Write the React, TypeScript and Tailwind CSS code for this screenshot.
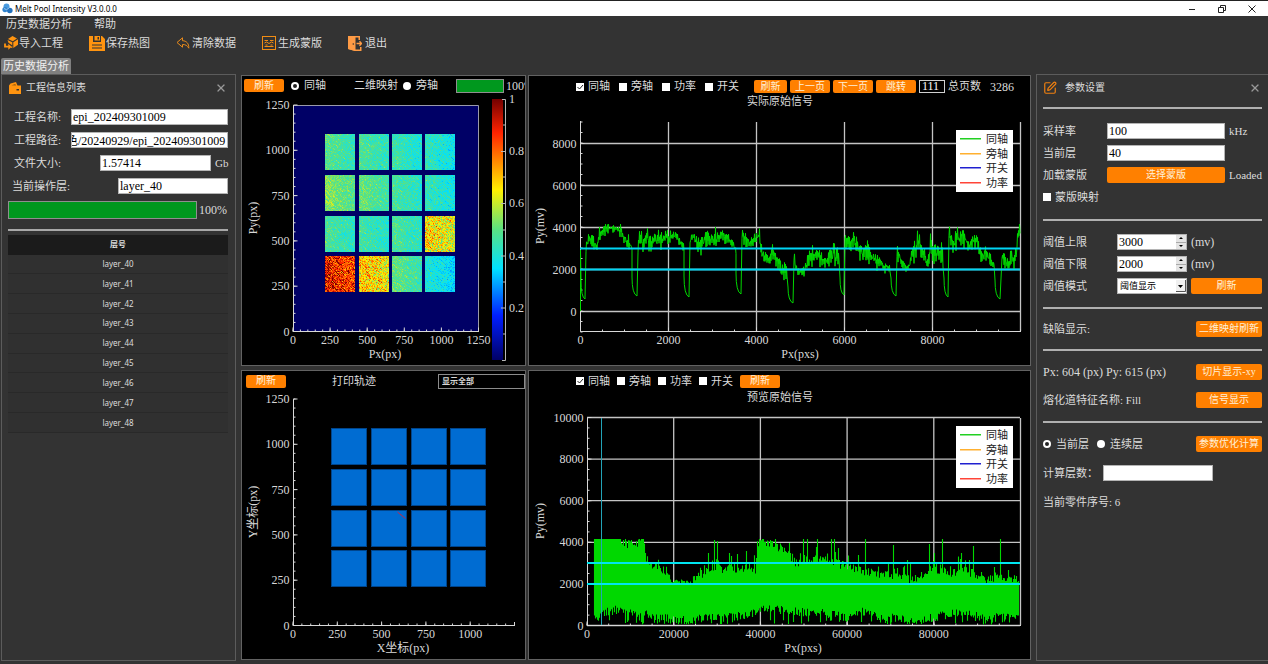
import type { ReactNode } from "react";
import { SquarePen, X } from "lucide-react";

const LAYERS = ["layer_40", "layer_41", "layer_42", "layer_43", "layer_44", "layer_45", "layer_46", "layer_47", "layer_48"];

const SERIES = [
    { name: "同轴", color: "#22d022" },
    { name: "旁轴", color: "#ffb030" },
    { name: "开关", color: "#2020d0" },
    { name: "功率", color: "#ff4438" },
];

const CHANNELS = ["同轴", "旁轴", "功率", "开关"];

// Small deterministic generator so the plots look the same on every render
function createRandom(seed: number) {
    let s = seed;
    return () => {
        s = (s * 48271) % 2147483647;
        return s / 2147483647;
    };
}

/* ---------- colour map ---------- */

const COLOR_STOPS: [number, number, number, number][] = [
    [0, 0, 0, 102],
    [0.17, 0, 30, 255],
    [0.35, 0, 225, 255],
    [0.5, 90, 225, 130],
    [0.65, 255, 240, 0],
    [0.87, 255, 35, 0],
    [1, 115, 0, 0],
];

function colorAt(value: number) {
    const v = Math.min(1, Math.max(0, value));
    for (let i = 1; i < COLOR_STOPS.length; i++) {
        const a = COLOR_STOPS[i - 1];
        const b = COLOR_STOPS[i];
        if (v <= b[0]) {
            const t = (v - a[0]) / (b[0] - a[0]);
            const mix = (k: number) => Math.round(a[k] + (b[k] - a[k]) * t);
            return `rgb(${mix(1)},${mix(2)},${mix(3)})`;
        }
    }
    return "rgb(115,0,0)";
}

/* ---------- heat map cells ---------- */

const HEAT_COLS = [325, 359, 392, 425];
const HEAT_ROWS = [134, 175, 216, 256];
const HEAT_MEAN = [
    [0.46, 0.45, 0.42, 0.4],
    [0.51, 0.48, 0.44, 0.41],
    [0.44, 0.43, 0.44, 0.63],
    [0.86, 0.66, 0.47, 0.37],
];

function buildHeatPaths() {
    const rand = createRandom(7013);
    const levels: string[] = Array(41).fill("");
    HEAT_ROWS.forEach((y0, r) => {
        HEAT_COLS.forEach((x0, c) => {
            const mean = HEAT_MEAN[r][c];
            const hot = mean > 0.6;
            const spread = hot ? 0.18 : 0.08;
            const streaks = Array.from({ length: 70 }, () => ({ gain: (rand() - 0.4) * (hot ? 0.22 : 0.12), phase: rand() * 6 }));
            for (let y = 0; y < 36; y++) {
                for (let x = 0; x < 30; x++) {
                    const edge = (15 - x) * 0.002;
                    const { gain, phase } = streaks[y - x + 30];
                    const streak = gain * Math.max(0, Math.sin((x + y) / 5 + phase));
                    const v = mean + edge + streak + (rand() + rand() - 1) * spread;
                    const level = Math.max(0, Math.min(40, Math.round(v * 40)));
                    levels[level] += `M${x0 + x} ${y0 + y}h1v1h-1z`;
                }
            }
        });
    });
    return levels.map((d, i) => ({ d, fill: colorAt(i / 40) })).filter((p) => p.d);
}

const HEAT_PATHS = buildHeatPaths();

/* ---------- raw signal of the current page ---------- */

// Bursts between laser-off dips, each point is [x, top, bottom]
const BURSTS: number[][][] = [
    [[586, 240, 252], [589, 232, 243], [594, 236, 250], [597, 240, 254], [600, 228, 240], [605, 224, 234], [618, 224, 232], [621, 225, 240], [625, 232, 245], [632, 243, 253]],
    [[638, 244, 252], [640, 224, 248], [643, 238, 256], [647, 226, 245], [650, 236, 256], [653, 226, 248], [658, 234, 248], [663, 230, 248], [668, 230, 247], [675, 230, 240], [680, 235, 248], [684, 244, 252]],
    [[690, 230, 250], [693, 230, 240], [696, 234, 250], [701, 238, 257], [706, 230, 247], [712, 232, 246], [718, 232, 246], [722, 224, 240], [728, 233, 248], [732, 238, 250], [736, 243, 258]],
    [[742, 226, 240], [745, 232, 248], [750, 236, 248], [755, 236, 246], [759, 225, 245], [762, 245, 258], [768, 254, 269], [772, 245, 262], [776, 250, 268], [782, 262, 277], [787, 262, 280]],
    [[794, 250, 262], [796, 265, 275], [803, 268, 276], [806, 258, 274], [810, 244, 266], [814, 246, 268], [822, 250, 268], [830, 250, 270], [834, 242, 268], [839, 248, 266]],
    [[845, 224, 245], [848, 236, 252], [855, 230, 250], [858, 242, 252], [863, 246, 262], [867, 238, 260], [873, 252, 264], [880, 256, 268], [885, 262, 270], [890, 265, 272]],
    [[897, 244, 262], [900, 252, 265], [905, 262, 272], [909, 262, 271], [912, 250, 262], [916, 234, 262], [920, 224, 256], [921, 244, 258], [928, 258, 268], [931, 224, 260], [932, 244, 262], [937, 244, 262], [943, 240, 268]],
    [[949, 224, 240], [953, 236, 254], [957, 226, 250], [963, 228, 244], [968, 236, 252], [973, 234, 250], [978, 232, 250], [981, 250, 262], [986, 246, 262], [994, 258, 269]],
    [[1002, 248, 265], [1006, 256, 270], [1012, 250, 266], [1016, 252, 262], [1018, 225, 250], [1020, 225, 245]],
];

// [start x, end x, start y, end y] of every dip
const DIPS = [
    [581, 585, 292, 299],
    [632, 637, 289, 296],
    [684, 689, 288, 297],
    [736, 741, 285, 294],
    [788, 793, 299, 303],
    [840, 844, 290, 295],
    [891, 896, 290, 296],
    [944, 948, 290, 297],
    [995, 1000, 292, 299],
];

function envelope(points: number[][], x: number) {
    for (let i = 1; i < points.length; i++) {
        const a = points[i - 1];
        const b = points[i];
        if (x <= b[0]) {
            const t = (x - a[0]) / (b[0] - a[0] || 1);
            return [a[1] + (b[1] - a[1]) * t, a[2] + (b[2] - a[2]) * t];
        }
    }
    const last = points[points.length - 1];
    return [last[1], last[2]];
}

function buildPageSignal() {
    const rand = createRandom(2101);
    let d = "M580.5 311V250";
    BURSTS.forEach((burst, i) => {
        const [x0, x1, y0, y1] = DIPS[i];
        d += `L${x0} ${y0 - 12}Q${x0} ${y1 - 2} ${x1} ${y1}`;
        let up = false;
        for (let x = burst[0][0]; x <= burst[burst.length - 1][0]; x += 0.5) {
            const [top, bottom] = envelope(burst, x);
            const reach = (bottom - top) * rand() * 0.6;
            const spike = rand() > 0.93 ? 5 : 0;
            const y = up ? top + reach - spike : bottom - reach + spike;
            up = !up;
            d += `L${x} ${Math.max(224, y).toFixed(1)}`;
        }
    });
    return d;
}

const PAGE_SIGNAL = buildPageSignal();

/* ---------- preview of the full signal ---------- */

const PREVIEW: number[][] = [
    [594, 539, 618], [605, 539, 612], [620, 539, 609], [622, 543, 611], [643, 543, 613], [646, 560, 614], [655, 566, 616], [668, 571, 618],
    [670, 580, 620], [690, 582, 620], [700, 574, 619], [710, 568, 617], [740, 567, 616], [755, 570, 612], [757, 541, 611], [770, 543, 608],
    [783, 548, 610], [795, 562, 612], [818, 558, 613], [832, 560, 614], [845, 566, 614], [862, 570, 612], [880, 574, 616], [900, 578, 619],
    [920, 577, 620], [932, 570, 618], [950, 573, 614], [965, 569, 613], [985, 579, 617], [1005, 577, 618], [1018, 578, 618],
];

const PREVIEW_SPIKES = [
    [714, 540], [717, 541], [708, 553], [729, 553], [737, 554], [746, 551], [790, 553], [803, 539], [807, 539], [817, 539],
    [831, 539], [834, 539], [858, 555], [865, 539], [893, 545], [907, 560], [929, 544], [934, 553], [942, 539], [961, 553], [973, 546], [1000, 539],
];

function buildPreviewSignal() {
    const rand = createRandom(9907);
    const spikes = new Map(PREVIEW_SPIKES.map(([x, y]) => [x, y]));
    let d = "";
    for (let x = 594; x <= 1018; x++) {
        const [top, bottom] = envelope(PREVIEW, x);
        const flat = x <= 620;
        const calm = x > 668 && x < 692;
        let y0 = top + (flat ? 0 : (rand() - 0.4) * (calm ? 4 : 9));
        if (!flat && !calm && rand() > 0.75) y0 -= rand() * 13;
        y0 = Math.max(539, y0);
        let y1 = bottom + (rand() - 0.5) * 9;
        if (rand() > 0.82) y1 = 620 + rand() * 5;
        d += `M${x}.5 ${(spikes.get(x) ?? y0).toFixed(1)}V${Math.min(625, y1).toFixed(1)}`;
    }
    return d;
}

const PREVIEW_SIGNAL = buildPreviewSignal();

/* ---------- shared controls ---------- */

function OrangeButton({ children, className = "" }: { children: ReactNode; className?: string }) {
    return (
        <button type="button" className={`flex items-center justify-center rounded-xs bg-[#ff8000] text-[10px] whitespace-nowrap text-[#fff0d8] hover:bg-[#ff9326] ${className}`}>
            {children}
        </button>
    );
}

function Check({ label, checked = false }: { label: string; checked?: boolean }) {
    return (
        <label className="flex items-center gap-1 whitespace-nowrap">
            <span className="relative flex">
                <input type="checkbox" defaultChecked={checked} className="peer size-2 appearance-none bg-white" />
                <svg viewBox="0 0 8 8" className="pointer-events-none absolute inset-0 hidden size-2 peer-checked:block">
                    <path d="M1.5 4l2 2 3.5-4" fill="none" stroke="#222" />
                </svg>
            </span>
            {label}
        </label>
    );
}

function Radio({ label, name, checked = false }: { label: string; name: string; checked?: boolean }) {
    return (
        <label className="flex items-center gap-[5px] whitespace-nowrap">
            <input type="radio" name={name} defaultChecked={checked} className="size-2 appearance-none rounded-full bg-white checked:border-2 checked:border-white checked:bg-[#222]" />
            {label}
        </label>
    );
}

function Progress({ className }: { className: string }) {
    return (
        <div role="progressbar" aria-valuenow={100} className={`border border-[#8f8f8f] bg-[#232323] ${className}`}>
            <div className="h-full bg-[#00981e]" style={{ width: "100%" }} />
        </div>
    );
}

const FIELD = "h-4 min-w-0 border border-[#b4b4b4] bg-white text-[12px] text-black outline-none";

/* ---------- icons ---------- */

function AppIcon() {
    return (
        <svg viewBox="0 0 11 11" className="size-[11px]">
            <circle cx="4.500" cy="3.600" r="3" fill="#4a9be0" />
            <circle cx="3" cy="6.600" r="2.600" fill="#3184cf" />
            <circle cx="7.800" cy="7.500" r="2.800" fill="#2371bd" />
            <path d="M2 5.500l2.500 1.200L7 5" fill="none" stroke="#bfe0fa" strokeWidth=".7" />
        </svg>
    );
}

function ImportIcon() {
    return (
        <svg viewBox="0 0 14 14" className="size-[14px]">
            <path d="M8.500 0L13 2.500 8.800 5.300 4 3z" fill="#ff9410" />
            <path d="M3.500 4l4.800 2.300v6L6.800 11.500 8.500 9.500 4.500 6.800z" fill="#ff9410" />
            <path d="M9.300 6.200L14 3.200v5.600l-4.700 3.200z" fill="#ff9410" />
            <path d="M1 7.500v3.200h4" fill="none" stroke="#ff9410" strokeWidth="1.800" />
            <path d="M4.300 7.700l3.400 3-3.400 3z" fill="#ff9410" />
        </svg>
    );
}

function SaveIcon() {
    return (
        <svg viewBox="0 0 16 16" className="size-4">
            <path d="M0 1h4v6h8V1h1l3 3v12H0z" fill="#ff9410" />
            <path d="M5.500 1H11v4.500H5.500z" fill="#ff9410" />
            <path d="M8.500 2h1.500v2.500H8.500z" fill="#333" />
            <path d="M3 10h10M3 13h10" stroke="#333" strokeWidth="1.200" />
        </svg>
    );
}

function UndoIcon() {
    return (
        <svg viewBox="0 0 14 12" className="h-3 w-[14px]">
            <path d="M6.500.8L1 5.500l5.500 4.700V7.500c3 0 4.800.9 6.300 3.700C13 6.500 10.500 3.800 6.500 3.700z" fill="none" stroke="#e98a1a" strokeLinejoin="round" />
        </svg>
    );
}

function MaskIcon() {
    return (
        <svg viewBox="0 0 14 14" className="size-[14px]" fill="none" stroke="#f08c14">
            <rect x=".5" y=".5" width="13" height="13" />
            <path d="M2.500 4.500h3.500M8 4.500h3.500M2.500 7l2-1 2.500 1.500L9.500 6l2 1M2.500 10.500h9M3.500 9h2M8.500 9h2" />
        </svg>
    );
}

function ExitIcon() {
    return (
        <svg viewBox="0 0 14 15" className="h-[15px] w-[14px]">
            <path d="M0 0h12v4h-1.500V1.500H7.500v12H12V11h1.500v4H7L0 13z" fill="#ff9b45" />
            <path d="M0 0l7 2v13l-7-2z" fill="#ff9b45" />
            <path d="M8.500 7.500h5M11.500 5.300l2 2.200-2 2.200" fill="none" stroke="#ff9b45" strokeWidth="1.300" />
            <circle cx="5.300" cy="8" r=".8" fill="#333" />
        </svg>
    );
}

function CaseIcon() {
    return (
        <svg viewBox="0 0 12 12" className="size-3">
            <path d="M0 3.500L1.500 1.500 7 0l1.500 3.500H12V12H0z" fill="#ff9410" />
            <path d="M2.500 3.300L6.300 2l.7 1.500z" fill="#8a5510" />
            <path d="M7.500 7h2.500v1.500H7.500z" fill="#333" />
        </svg>
    );
}

/* ---------- plot pieces ---------- */

interface Tick {
    pos: number;
    label: string;
}

const ticks = (start: number, step: number, labels: string[]): Tick[] => labels.map((label, i) => ({ pos: start + step * i, label }));

function XAxis({ items, y, x1, x2, step, long = 4 }: { items: Tick[]; y: number; x1: number; x2: number; step: number; long?: number }) {
    let d = `M${x1} ${y}H${x2}`;
    items.forEach((t) => (d += `M${t.pos} ${y}v-${long}`));
    for (let x = x1; x < x2; x += step) d += `M${x} ${y}v-2`;
    return (
        <g>
            <path d={d} stroke="#d8d8d8" fill="none" />
            {items.map((t) => (
                <text key={t.label} x={t.pos} y={y + 12} textAnchor="middle">{t.label}</text>
            ))}
        </g>
    );
}

function YAxis({ items, x, y1, y2, step, long = 4 }: { items: Tick[]; x: number; y1: number; y2: number; step: number; long?: number }) {
    let d = `M${x} ${y1}V${y2}`;
    items.forEach((t) => (d += `M${x} ${t.pos}h${long}`));
    for (let y = y2; y > y1; y -= step) d += `M${x} ${y}h2`;
    return (
        <g>
            <path d={d} stroke="#d8d8d8" fill="none" />
            {items.map((t) => (
                <text key={t.label} x={x - 4} y={t.pos + 4} textAnchor="end">{t.label}</text>
            ))}
        </g>
    );
}

function Legend({ y }: { y: number }) {
    return (
        <g>
            <rect x="956" y={y} width="57" height="62" fill="#fff" />
            {SERIES.map((s, i) => (
                <g key={s.name}>
                    <rect x="960" y={y + 8 + Math.round(i * 14.5)} width="21" height="1.500" fill={s.color} />
                    <text x="986" y={y + 13 + Math.round(i * 14.5)} fontSize="11" fill="#222">{s.name}</text>
                </g>
            ))}
        </g>
    );
}

function PlotPanel({ header, viewBox, children }: { header: ReactNode; viewBox: string; children: ReactNode }) {
    return (
        <section className="min-w-0 overflow-hidden border border-[#626262] bg-black">
            {header}
            <svg viewBox={viewBox} className="block h-auto w-full overflow-visible" fontSize="12" fill="#d8d8d8">
                {children}
            </svg>
        </section>
    );
}

function HeatMap() {
    return (
        <PlotPanel
            viewBox="242 95 283 270"
            header={
                <div className="flex h-[19px] items-center pl-0.5">
                    <OrangeButton className="mr-[7px] h-[13px] w-10 shrink-0">刷新</OrangeButton>
                    <Radio name="heat-axis" label="同轴" checked />
                    <span className="ml-7 mr-[5px] whitespace-nowrap">二维映射</span>
                    <Radio name="heat-axis" label="旁轴" />
                    <Progress className="ml-[18px] h-[14px] w-12 shrink-0" />
                    <span className="ml-0.5 text-[12px]">100%</span>
                </div>
            }
        >
            <defs>
                <linearGradient id="heat-scale" x1="0" y1="1" x2="0" y2="0">
                    {COLOR_STOPS.map(([offset, r, g, b]) => (
                        <stop key={offset} offset={offset} stopColor={`rgb(${r},${g},${b})`} />
                    ))}
                </linearGradient>
            </defs>
            <rect x="293" y="105" width="186" height="227" fill="#000066" />
            <path d="M293 105.500H478.500V331" stroke="#9a9aaa" fill="none" />
            <g shapeRendering="crispEdges">
                {HEAT_PATHS.map((p) => (
                    <path key={p.fill} d={p.d} fill={p.fill} />
                ))}
            </g>
            <XAxis items={ticks(293, 37.1, ["0", "250", "500", "750", "1000", "1250"])} y={331.5} x1={293} x2={479} step={7.42} />
            <YAxis items={ticks(331.5, -45.3, ["0", "250", "500", "750", "1000", "1250"])} x={293.5} y1={105} y2={331.5} step={9.06} />
            <rect x="492" y="99" width="11" height="261" fill="url(#heat-scale)" />
            <path d="M502 99.500h3.500v261H502M505 151.500h-4M505 203.500h-4M505 256h-4M505 308h-4M505 125h-2M505 177h-2M505 230h-2M505 282h-2M505 334h-2" stroke="#b8b8b8" fill="none" />
            {ticks(103, 52.2, ["1", "0.8", "0.6", "0.4", "0.2"]).map((t) => (
                <text key={t.label} x="509" y={t.pos}>{t.label}</text>
            ))}
            <text x="385" y="358" textAnchor="middle">Px(px)</text>
            <text transform="translate(257 218) rotate(-90)" textAnchor="middle">Py(px)</text>
        </PlotPanel>
    );
}

function PageSignal() {
    const xs = ticks(580.5, 88, ["0", "2000", "4000", "6000", "8000"]);
    const ys = ticks(311.5, -42, ["0", "2000", "4000", "6000", "8000"]);
    return (
        <PlotPanel
            viewBox="529 95 501 270"
            header={
                <div className="flex h-[19px] items-center pl-[47px] pt-0.5">
                    <div className="flex gap-[9px]">
                        {CHANNELS.map((c, i) => <Check key={c} label={c} checked={i === 0} />)}
                    </div>
                    <div className="ml-[15px] flex gap-[3px]">
                        <OrangeButton className="h-[13px] w-[33px]">刷新</OrangeButton>
                        <OrangeButton className="h-[13px] w-10">上一页</OrangeButton>
                        <OrangeButton className="h-[13px] w-10">下一页</OrangeButton>
                        <OrangeButton className="h-[13px] w-10">跳转</OrangeButton>
                    </div>
                    <input aria-label="页码" defaultValue="111" className="mx-[3px] h-[13px] w-[26px] border border-[#d0d0d0] bg-black pl-0.5 text-[12px] text-white outline-none" />
                    <span className="whitespace-nowrap">总页数</span>
                    <span className="ml-[9px] text-[12px]">3286</span>
                </div>
            }
        >
            <text x="780" y="105" fontSize="11" textAnchor="middle">实际原始信号</text>
            <path d={xs.slice(1).map((t) => `M${t.pos} 122V331`).join("") + "M1020.500 122V331" + ys.map((t) => `M580 ${t.pos}H1020`).join("")} stroke="#c4c4c4" strokeWidth="1.300" fill="none" />
            <XAxis items={xs} y={331.5} x1={580.5} x2={1021} step={22} />
            <YAxis items={ys} x={580.5} y1={121} y2={332} step={10.5} />
            <path d={PAGE_SIGNAL} stroke="#00d800" fill="none" strokeLinejoin="round" />
            <path d="M580 248.500H1020M580 269.500H1020" stroke="#00d5f5" strokeWidth="2" />
            <Legend y={130} />
            <text x="800" y="358" textAnchor="middle">Px(pxs)</text>
            <text transform="translate(544 226) rotate(-90)" textAnchor="middle">Py(mv)</text>
        </PlotPanel>
    );
}

function PrintTrack() {
    return (
        <PlotPanel
            viewBox="242 391 283 268"
            header={
                <div className="flex h-5 items-center pl-1">
                    <OrangeButton className="h-[13px] w-10">刷新</OrangeButton>
                    <span className="ml-[46px]">打印轨迹</span>
                    <select aria-label="轨迹显示" className="ml-auto h-[15px] w-[87px] appearance-none border border-[#8c8c8c] bg-black pl-[3px] text-[8px] leading-[13px] font-bold text-[#d8d8d8] outline-none">
                        <option>显示全部</option>
                    </select>
                </div>
            }
        >
            {[428, 469, 510, 550].map((y) =>
                [331, 371, 411, 450].map((x) => (
                    <rect key={`${x}-${y}`} x={x + 0.5} y={y + 0.5} width="35" height="36" fill="#006cd2" stroke="#00458c" />
                )),
            )}
            <path d="M397.500 512L405.500 518.500" stroke="#c02848" />
            <XAxis items={ticks(293, 44.3, ["0", "250", "500", "750", "1000"])} y={625.5} x1={293} x2={515} step={8.86} />
            <path d="M514.500 625V622" stroke="#d8d8d8" />
            <YAxis items={ticks(625.5, -45.3, ["0", "250", "500", "750", "1000", "1250"])} x={293.5} y1={399} y2={625.5} step={9.06} />
            <text x="403" y="652" textAnchor="middle">X坐标(px)</text>
            <text transform="translate(257 512) rotate(-90)" textAnchor="middle">Y坐标(px)</text>
        </PlotPanel>
    );
}

function PreviewSignal() {
    const xs = ticks(587, 86.7, ["0", "20000", "40000", "60000", "80000"]);
    const ys = ticks(625.5, -41.6, ["0", "2000", "4000", "6000", "8000", "10000"]);
    return (
        <PlotPanel
            viewBox="529 391 501 268"
            header={
                <div className="flex h-5 items-center pl-[47px]">
                    <div className="flex gap-[7px]">
                        {CHANNELS.map((c, i) => <Check key={c} label={c} checked={i === 0} />)}
                    </div>
                    <OrangeButton className="ml-[7px] h-[13px] w-10">刷新</OrangeButton>
                </div>
            }
        >
            <text x="780" y="401" fontSize="11" textAnchor="middle">预览原始信号</text>
            <path d={xs.slice(1).map((t) => `M${t.pos} 418V625`).join("") + "M1020.500 418V625" + ys.map((t) => `M587 ${t.pos}H1020`).join("")} stroke="#c4c4c4" strokeWidth="1.300" fill="none" />
            <XAxis items={xs} y={625.5} x1={587} x2={1021} step={21.7} />
            <YAxis items={ys} x={587.5} y1={418} y2={625.5} step={10.4} />
            <path d={PREVIEW_SIGNAL} stroke="#00d800" strokeWidth="1.100" fill="none" />
            <path d="M601.500 418V625" stroke="#22a4b8" />
            <path d="M587 563H1020M587 584H1020" stroke="#00e5f0" strokeWidth="2" />
            <Legend y={426} />
            <text x="803" y="652" textAnchor="middle">Px(pxs)</text>
            <text transform="translate(544 521) rotate(-90)" textAnchor="middle">Py(mv)</text>
        </PlotPanel>
    );
}

/* ---------- side panels ---------- */

function PanelTitle({ icon, title }: { icon: ReactNode; title: string }) {
    return (
        <div className="flex h-[26px] items-center">
            {icon}
            <h2 className="text-[10px]">{title}</h2>
            <button type="button" aria-label="关闭" className="ml-auto mr-px text-[#999]">
                <X size={12} strokeWidth={2.5} />
            </button>
        </div>
    );
}

function ProjectPanel() {
    return (
        <aside className="w-[235px] shrink-0 border border-[#5c5c5c] pl-[6px] pr-[7px]">
            <PanelTitle icon={<span className="mr-[5px] ml-px"><CaseIcon /></span>} title="工程信息列表" />
            <div className="mt-2 flex flex-col gap-[7px]">
                <div className="flex items-center">
                    <label htmlFor="name" className="w-[63px] pl-[6px]">工程名称:</label>
                    <input id="name" defaultValue="epi_202409301009" className={`${FIELD} flex-1 pl-px`} />
                </div>
                <div className="flex items-center">
                    <label htmlFor="path" className="w-[63px] pl-[6px]">工程路径:</label>
                    <input id="path" defaultValue="色/20240929/epi_202409301009" className={`${FIELD} flex-1 -indent-1.5`} />
                </div>
                <div className="flex items-center">
                    <label htmlFor="size" className="w-[92px] pl-[6px]">文件大小:</label>
                    <input id="size" defaultValue="1.57414" className={`${FIELD} flex-1 pl-px`} />
                    <span className="w-[17px] pl-1 text-[11px]">Gb</span>
                </div>
                <div className="flex items-center">
                    <label htmlFor="layer" className="w-[110px] pl-1">当前操作层:</label>
                    <input id="layer" defaultValue="layer_40" className={`${FIELD} flex-1 pl-px`} />
                </div>
                <div className="flex items-center">
                    <Progress className="h-[18px] flex-1" />
                    <span className="w-[31px] pl-0.5 text-[12px]">100%</span>
                </div>
            </div>
            <hr className="mt-[10px] border-t-2 border-[#a8a8a8]" />
            <table className="mt-1 h-[198px] w-full border-collapse text-center text-[8px]">
                <thead>
                    <tr className="h-5 bg-[#1b1b1b]">
                        <th className="p-0">层号</th>
                    </tr>
                </thead>
                <tbody className="font-['Noto_Sans',sans-serif]">
                    {LAYERS.map((layer) => (
                        <tr key={layer} className="border-b border-[#292929] bg-[#303030]">
                            <td className="p-0">{layer}</td>
                        </tr>
                    ))}
                </tbody>
            </table>
        </aside>
    );
}

function SpinField({ id, label, value }: { id: string; label: string; value: string }) {
    return (
        <div className="flex h-4 items-center">
            <label htmlFor={id} className="w-[74px]">{label}</label>
            <div className="flex h-4 w-[70px] border border-[#b4b4b4] bg-white">
                <input id={id} defaultValue={value} className="min-w-0 flex-1 pl-px text-[12px] text-black outline-none" />
                <div className="flex w-[10px] flex-col bg-[#e4e4e4]">
                    <button type="button" aria-label={`${label} +`} className="flex flex-1 items-center justify-center border-b border-[#aaa]">
                        <svg viewBox="0 0 4 2" className="h-0.5 w-1"><path d="M0 2l2-2 2 2z" /></svg>
                    </button>
                    <button type="button" aria-label={`${label} -`} className="flex flex-1 items-center justify-center">
                        <svg viewBox="0 0 4 2" className="h-0.5 w-1"><path d="M0 0l2 2 2-2z" /></svg>
                    </button>
                </div>
            </div>
            <span className="pl-1 text-[12px]">(mv)</span>
        </div>
    );
}

function Divider() {
    return <hr className="border-t-2 border-[#b0b0b0]" />;
}

function SettingsPanel() {
    return (
        <aside className="w-[232px] shrink-0 border border-r-0 border-[#5c5c5c] px-[6px]">
            <PanelTitle icon={<SquarePen size={14} className="mr-2 text-[#f08010]" />} title="参数设置" />
            <div className="mt-[6px]"><Divider /></div>
            <div className="my-[14px] flex flex-col gap-[6px]">
                <div className="flex h-4 items-center">
                    <label htmlFor="rate" className="w-16">采样率</label>
                    <input id="rate" defaultValue="100" className={`${FIELD} flex-1 pl-px`} />
                    <span className="w-[37px] pl-1 text-[11px]">kHz</span>
                </div>
                <div className="flex h-4 items-center">
                    <label htmlFor="current" className="w-16">当前层</label>
                    <input id="current" defaultValue="40" className={`${FIELD} mr-[37px] flex-1 pl-px`} />
                </div>
                <div className="flex h-4 items-center">
                    <span className="w-16">加载蒙版</span>
                    <OrangeButton className="h-4 flex-1">选择蒙版</OrangeButton>
                    <span className="w-[37px] pl-1 text-[11px]">Loaded</span>
                </div>
                <div className="flex h-4 items-center">
                    <Check label="蒙版映射" />
                </div>
            </div>
            <Divider />
            <div className="my-[13px] flex flex-col gap-[6px]">
                <SpinField id="upper" label="阈值上限" value="3000" />
                <SpinField id="lower" label="阈值下限" value="2000" />
                <div className="flex h-4 items-center">
                    <label htmlFor="mode" className="w-[74px]">阈值模式</label>
                    <div className="relative w-[70px]">
                        <select id="mode" className="block h-4 w-full appearance-none border border-[#b4b4b4] bg-white pl-0.5 text-[9px] leading-[14px] text-black outline-none">
                            <option>阈值显示</option>
                        </select>
                        <svg viewBox="0 0 10 12" className="pointer-events-none absolute right-px top-0.5 h-3 w-[10px]">
                            <path d="M0 0h10v12H0z" fill="#f0f0f0" />
                            <path d="M0 11.500h9.500V0" fill="none" stroke="#555" />
                            <path d="M2 5h5L4.500 8z" fill="#000" />
                        </svg>
                    </div>
                    <OrangeButton className="ml-1 h-4 flex-1">刷新</OrangeButton>
                </div>
            </div>
            <Divider />
            <div className="my-3 flex h-4 items-center justify-between">
                <span>缺陷显示:</span>
                <OrangeButton className="h-4 w-[66px]">二维映射刷新</OrangeButton>
            </div>
            <Divider />
            <div className="my-[13px] flex flex-col gap-3">
                <div className="flex h-4 items-center justify-between">
                    <span className="text-[12px]">Px: 604 (px) Py: 615 (px)</span>
                    <OrangeButton className="h-4 w-[66px]">切片显示-xy</OrangeButton>
                </div>
                <div className="flex h-4 items-center justify-between">
                    <span>熔化道特征名称: Fill</span>
                    <OrangeButton className="h-4 w-[66px]">信号显示</OrangeButton>
                </div>
            </div>
            <Divider />
            <div className="my-[13px] flex flex-col gap-[13px]">
                <div className="flex h-4 items-center gap-2">
                    <Radio name="layer-mode" label="当前层" checked />
                    <Radio name="layer-mode" label="连续层" />
                    <OrangeButton className="ml-auto h-4 w-[66px]">参数优化计算</OrangeButton>
                </div>
                <div className="flex h-4 items-center">
                    <label htmlFor="count" className="w-[60px]">计算层数：</label>
                    <input id="count" className={`${FIELD} w-[110px]`} />
                </div>
                <p className="flex h-4 items-center">当前零件序号: 6</p>
            </div>
        </aside>
    );
}

/* ---------- window ---------- */

function TitleBar() {
    return (
        <header className="flex h-4 items-center border-t border-[#222] bg-white pl-[2px] pr-3 text-black">
            <AppIcon />
            <h1 className="ml-0.5 font-['Noto_Sans',sans-serif] text-[8px]">Melt Pool Intensity V3.0.0.0</h1>
            <div className="ml-auto flex items-center gap-[22px]">
                <button type="button" aria-label="最小化">
                    <svg viewBox="0 0 8 8" className="size-2"><path d="M1 4.500h6" stroke="#222" /></svg>
                </button>
                <button type="button" aria-label="还原">
                    <svg viewBox="0 0 8 8" className="size-2" fill="none" stroke="#222"><path d="M.5 2.500h5v5h-5zM2.500 2V.5h5v5H6" /></svg>
                </button>
                <button type="button" aria-label="关闭窗口">
                    <svg viewBox="0 0 8 8" className="size-2" stroke="#222"><path d="M.5.5l7 7M7.500.5l-7 7" /></svg>
                </button>
            </div>
        </header>
    );
}

export default function App() {
    return (
        <div className="flex min-h-screen flex-col bg-[#333] pb-[3px] font-['Liberation_Serif','Noto_Sans_CJK_SC',serif] text-[11px] leading-none text-[#dcdcdc]">
            <TitleBar />
            <nav className="flex h-4 items-center gap-[22px] pl-[6px]">
                <button type="button">历史数据分析</button>
                <button type="button">帮助</button>
            </nav>
            <div className="flex h-[22px] items-center gap-[26px] pl-1">
                <button type="button" className="flex items-center gap-px"><ImportIcon />导入工程</button>
                <button type="button" className="flex items-center gap-px"><SaveIcon />保存热图</button>
                <button type="button" className="flex items-center gap-0.5"><UndoIcon />清除数据</button>
                <button type="button" className="flex items-center gap-0.5"><MaskIcon />生成蒙版</button>
                <button type="button" className="flex items-center gap-[3px]"><ExitIcon />退出</button>
            </div>
            <div className="flex pl-px pt-1">
                <button type="button" className="h-4 rounded-t-xs bg-[#808080] px-0.5 text-[#f0f0f0]">历史数据分析</button>
            </div>
            <div className="flex flex-1 items-stretch gap-[5px] pl-px">
                <ProjectPanel />
                <main className="grid min-w-0 flex-1 grid-cols-[285fr_503fr] content-start gap-x-0.5 gap-y-1 pt-px">
                    <HeatMap />
                    <PageSignal />
                    <PrintTrack />
                    <PreviewSignal />
                </main>
                <SettingsPanel />
            </div>
        </div>
    );
}
